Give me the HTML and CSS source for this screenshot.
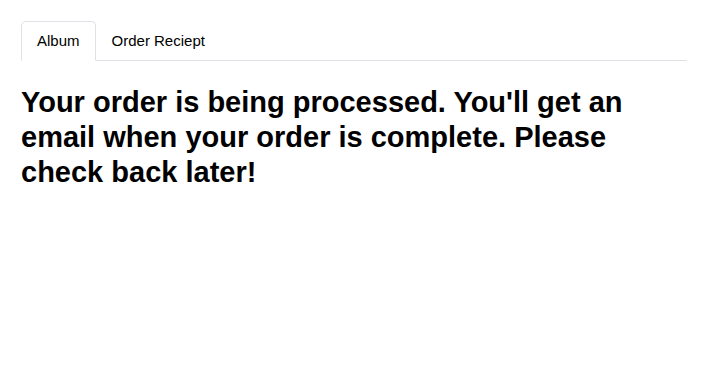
FILE: index.html
```html
<!DOCTYPE html>
<html lang="en">
<head>
    <meta charset="UTF-8">
    <meta name="viewport" content="width=device-width, initial-scale=1.0">
    <title>Order</title>
    <link rel="stylesheet" href="styles.css">
</head>
<body>
    <div class="container">
        <ul class="nav-tabs">
            <li class="nav-item"><a class="nav-link active" href="#">Album</a></li>
            <li class="nav-item"><a class="nav-link" href="#">Order Reciept</a></li>
        </ul>

        <h2 class="message">Your order is being processed. You'll get an email when your order is complete. Please check back later!</h2>
    </div>
</body>
</html>
```

FILE: styles.css
```css
body {
    margin: 0;
    font-family: "Liberation Sans", Arial, sans-serif;
    color: #000;
    background-color: #fff;
}
.container {
    width: 666px;
    padding: 21px 0 0 21px;
}
.nav-tabs {
    display: flex;
    list-style: none;
    margin: 0;
    padding: 0;
    border-bottom: 1px solid #dee2e6;
}
.nav-item {
    margin-bottom: -1px;
}
.nav-link {
    display: block;
    padding: 8px 15px;
    font-size: 15px;
    line-height: 22px;
    color: #000;
    text-decoration: none;
    border: 1px solid transparent;
    border-top-left-radius: 5px;
    border-top-right-radius: 5px;
}
.nav-link.active {
    background-color: #fff;
    border-color: #dee2e6 #dee2e6 #fff;
}
.message {
    margin: 24px 0 0;
    font-size: 29px;
    line-height: 35px;
    font-weight: bold;
}
```
